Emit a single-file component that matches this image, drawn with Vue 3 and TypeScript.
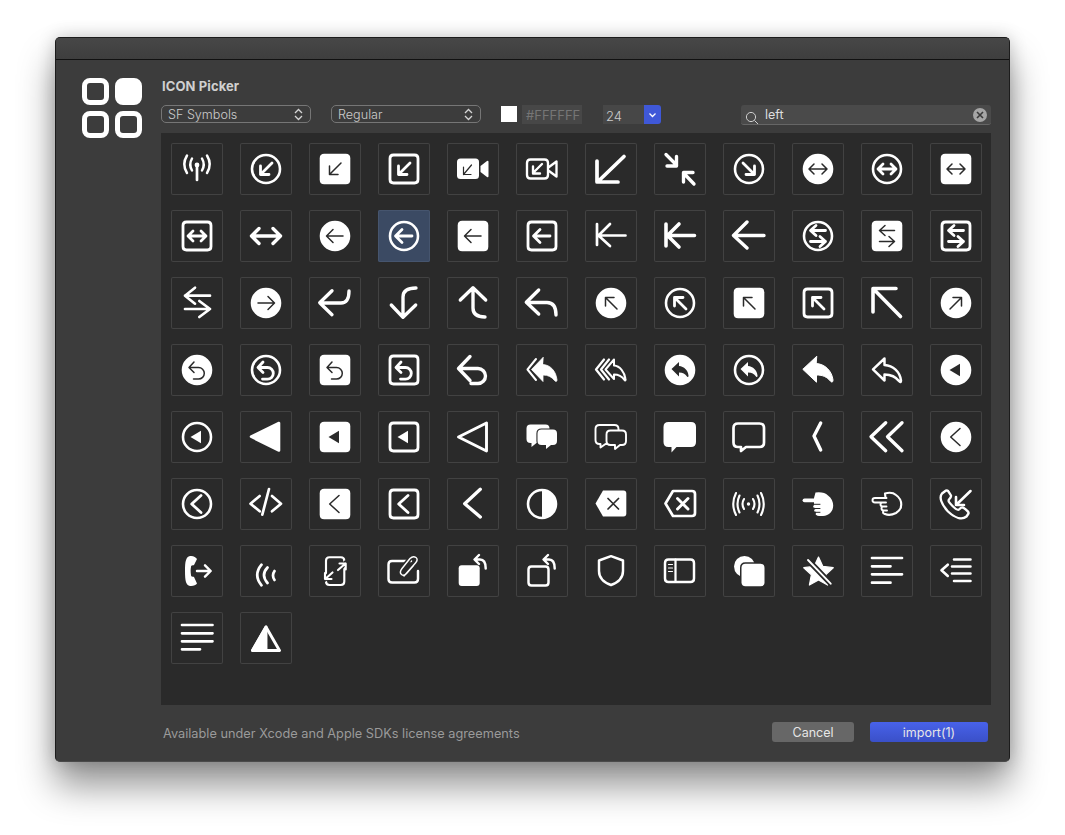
<script setup lang="ts">
type Layer = { d: string; fill?: string; stroke?: string; w?: number };

const W = "#fff";
const D = "#2a2a2a";

// the reference strokes come out a little heavier than measured
const WEIGHT = 1.12;

const f = (d: string, w = 0): Layer => ({ d, fill: W, stroke: w ? W : undefined, w });
const s = (d: string, w = 2.4): Layer => ({ d, stroke: W, w: w * WEIGHT });
const df = (d: string): Layer => ({ d, fill: D });
const ds = (d: string, w = 1.5): Layer => ({ d, stroke: D, w });

const circle = (cx: number, cy: number, r: number) =>
  `M${cx - r} ${cy}a${r} ${r} 0 1 0 ${2 * r} 0a${r} ${r} 0 1 0 ${-2 * r} 0Z`;
const rrect = (x0: number, y0: number, x1: number, y1: number, r: number) =>
  `M${x0 + r} ${y0}H${x1 - r}Q${x1} ${y0} ${x1} ${y0 + r}V${y1 - r}Q${x1} ${y1} ${x1 - r} ${y1}H${x0 + r}Q${x0} ${y1} ${x0} ${y1 - r}V${y0 + r}Q${x0} ${y0} ${x0 + r} ${y0}Z`;
const bubble = (x0: number, y0: number, x1: number, y1: number, r: number, tx: number, th: number) =>
  `M${x0 + r} ${y0}H${x1 - r}Q${x1} ${y0} ${x1} ${y0 + r}V${y1 - r}Q${x1} ${y1} ${x1 - r} ${y1}H${tx + 5}L${tx} ${y1 + th}V${y1}H${x0 + r}Q${x0} ${y1} ${x0} ${y1 - r}V${y0 + r}Q${x0} ${y0} ${x0 + r} ${y0}Z`;

const disc = f(circle(26, 26, 15.3));
const ring = s(circle(26, 26, 14), 2.3);
const box = f(rrect(10.7, 10.7, 41.3, 41.3, 4.5));
const frame = s(rrect(12, 12, 40, 40, 3.5), 2.5);

const onDisc = (g: string): Layer[] => [disc, ds(g)];
const inRing = (g: string): Layer[] => [ring, s(g, 2.5)];
const onBox = (g: string): Layer[] => [box, ds(g)];
const inFrame = (g: string): Layer[] => [frame, s(g, 2.5)];

const swArrow = "M32 20L20.5 31.5M20.5 23V31.5H29";
const seArrow = "M20 20L31.5 31.5M31.5 23V31.5H23";
const nwArrow = "M32 32L20.5 20.5M20.5 29V20.5H29";
const neArrow = "M20 32L31.5 20.5M23 20.5H31.5V29";
const lrArrow = "M17.5 26H34.5M22 21L17 26L22 31M30 21L35 26L30 31";
const leftArrow = "M18 26H34M24 19.5L17.5 26L24 32.5";
const rightArrow = "M18 26H34M28 19.5L34.5 26L28 32.5";
const swap = "M33.5 20.5H19M24 15.5L18.5 20.5L24 25.5M18.5 31.5H33.5M28 26.5L33.5 31.5L28 36.5";
const undo = "M23 18L18 23.5L23 28.5M18.5 23.5H27.5a5.6 5.6 0 0 1 0 11.6H22.5";
const chev = "M30 17.5L20.7 26L30 34.5";
const tri = "M19.5 26L30 19.8V32.2Z";
const smallReply =
  "M25 18L17.5 25L25 32.5V28.5C29 28.5 31 30 33 32.5C34 33.5 34.5 33 34.5 31.5C34 26 30 22.5 25 22Z";
const bigReply =
  "M24.5 12.5L10.8 25.3L24.5 38.2V31C31 31 35 33 38.5 37.2C40 38.8 41 38 41 36C40 27 33 20 24.5 19.5Z";
const outlineReply =
  "M23.5 14.5L12 25.3L23.5 36.5V30.5C30 30.5 35 33 38.5 37.5C39.5 38.5 40 38 40 36.5C39 27.5 32 21.5 23.5 21Z";
const paperclip =
  "M26 31L37.5 18Q40.5 14.5 38 12.5Q35 10.5 32 13.5L24 23.5Q21 27.5 23.5 29.5Q26 31.5 29 28L35.5 20.5";
const rotateArrow = "M28 14.5H33Q38.7 14.5 38.7 23.5M32 10L27.5 14.5L32 19";

const star = (() => {
  const pts: string[] = [];
  for (let i = 0; i < 10; i++) {
    const r = i % 2 ? 7.5 : 15.5;
    const a = -Math.PI / 2 + (i * Math.PI) / 5;
    pts.push(`${(26.5 + r * Math.cos(a)).toFixed(2)} ${(27.5 + r * Math.sin(a)).toFixed(2)}`);
  }
  return `M${pts.join("L")}Z`;
})();

const phoneOutline =
  "M16 12.5L12 15.5C9 19 11 26 18 33.5C25 40 32 42 36.5 38.5L38.5 35.5C39 34 38 33 33 29.5C31.5 29 31 29.5 29 31.5C28 32.5 26.5 32 22.5 28C18.5 24 18 23 19 21.5C21 19.5 21.5 19 21 17.5C18 12.5 17.5 12 16 12.5Z";
const phoneFill =
  "M19 11C15 12 14 16 14 26C14 36 15 40 19 41C22 41.5 25 40 26 38.5L23 32C22 31.5 20 32 20 30C19.5 27 19.5 24 20 22C20 20 22 20.5 23 20L26 14C25 12 22 10.5 19 11Z";

const icons: Layer[][] = [
  // row 1
  [
    s("M26 23V37", 2.4),
    f(circle(26, 22, 2.4)),
    s("M21 15.5Q17.5 21.5 21 27.5M31 15.5Q34.5 21.5 31 27.5M16 12.5Q10.5 21.5 16 30M36 12.5Q41.5 21.5 36 30", 2.2),
  ],
  inRing(swArrow),
  onBox(swArrow),
  inFrame(swArrow),
  [
    f(rrect(10, 15.5, 32, 36, 3.5)),
    f("M33.5 23L40 18Q41.5 17 41.5 19V33Q41.5 35 40 34L33.5 29Z"),
    ds("M24.5 22L16.5 31.5M16.5 24V31.5H24", 1.2),
  ],
  [
    s(rrect(11, 16.5, 32, 35.5, 3.5), 2.1),
    s("M33 24L40.5 18.5V33.5L33 28", 2.1),
    s("M26 21L17 30M17 23.5V30.5H24", 2.1),
  ],
  [s("M39 13.5L13 38.5M12 18V39H33", 3.3)],
  [s("M12 11.5L22.5 22M22.5 13.5V23H13M40 41L29.5 30M29.5 39V29.5H39", 3)],
  inRing(seArrow),
  onDisc(lrArrow),
  inRing(lrArrow),
  onBox(lrArrow),
  // row 2
  inFrame(lrArrow),
  [s("M12 26H40M19 18.5L11.5 26L19 33.5M33 18.5L40.5 26L33 33.5", 3)],
  onDisc(leftArrow),
  inRing(leftArrow),
  onBox(leftArrow),
  inFrame(leftArrow),
  [s("M12 14V35M13.5 25.5H40.5M25 14L13.5 25.5L25 36", 2.4)],
  [s("M12 14V36M13.5 25.5H40.5M25 14L13.5 25.5L25 37", 3.2)],
  [s("M11 25.5H41M24 12L10.5 25.5L24 38", 3)],
  inRing(swap),
  onBox(swap),
  inFrame(swap),
  // row 3
  [s("M39 18.7H14M24 10.7L14 18.7L24 26.7M14 32H39M28.3 24L39 32L28.3 40", 2.4)],
  onDisc(rightArrow),
  [s("M11 26H32Q40 26 40 14M23 13.7L10.7 25.7L23 37.7", 3)],
  [s("M25 40V20Q25 11 38 11M13.3 28L25 40.3L37.7 28", 3)],
  [s("M26 11V31Q26 40 38 40M13.3 23L26 10.7L38.7 23", 3)],
  [s("M11 25.5H31Q40 25.5 40 38M22.7 13L10.3 25.3L22.7 37", 3)],
  onDisc(nwArrow),
  inRing(nwArrow),
  onBox(nwArrow),
  inFrame(nwArrow),
  [s("M12 35V11.5H35M12.5 12L39.5 39.5", 3.2)],
  onDisc(neArrow),
  // row 4
  onDisc(undo),
  inRing(undo),
  onBox(undo),
  inFrame(undo),
  [s("M23 12.5L11.5 24.5L23 36.5M12 24.5H31a7.5 7.5 0 0 1 0 15H24", 3)],
  [
    s("M20 15L11.5 25.5L20 36", 1.8),
    ds("M29 11L15.5 25.5L29 40", 3),
    f("M27 13.5L15.5 25.5L27 37.5V31C32 31 36 33 38.5 36.5C40 38 41 37.5 41 36C40 27.5 35 21 27 20.5Z", 0.8),
  ],
  [
    s("M19 15.5L11 25.5L19 35.5M24 15.5L16 25.5L24 35.5", 2),
    s("M29 15.5L20.5 25.5L29 35V30.5C33 30.5 37 32.5 39.5 36C40.5 37 40.7 36 40.5 35C39.5 28 35 22 29 21.5Z", 1.8),
  ],
  [disc, df(smallReply)],
  [ring, f(smallReply)],
  [f(bigReply, 1)],
  [s(outlineReply, 2.2)],
  [disc, df(tri)],
  // row 5
  [ring, f(tri)],
  [f("M11 25.7L39 12V39.5Z", 2.6)],
  [box, df(tri)],
  [frame, f(tri)],
  [s("M11.5 26L39.5 12V40Z", 2.6)],
  [
    f(bubble(10.5, 13.5, 33.5, 32, 4, 15.5, 4)),
    ds(bubble(21.5, 18.5, 41, 34, 4, 30, 4), 2.2),
    f(bubble(21.5, 18.5, 41, 34, 4, 30, 4)),
  ],
  [
    s(bubble(10.5, 14, 33.5, 33, 4, 15.5, 3.5), 1.7),
    df(bubble(21.5, 19.5, 41, 34, 4, 30, 4)),
    s(bubble(21.5, 19.5, 41, 34, 4, 30, 4), 1.7),
  ],
  [f(bubble(9.5, 11, 42, 36, 5, 17.5, 5.5))],
  [s(bubble(10.5, 12.5, 41, 36, 4.5, 18, 4), 2.4)],
  [s("M28.7 12L22 25L28.7 39", 3)],
  [s("M24.7 11.7L10 25.7L24.7 39.7M41 11.7L26.5 25.7L41 39.7", 3)],
  [disc, ds(chev)],
  // row 6
  inRing(chev),
  [s("M19.7 18L10.5 25.7L19.7 33.3M32 18L41 25.7L32 33.3", 2.4), s("M29 11L22.3 36.7", 2.4)],
  onBox(chev),
  inFrame(chev),
  [s("M33.3 11.3L17.7 25.7L33.3 39", 3)],
  [ring, f("M26 12a14 14 0 0 1 0 28Z")],
  [
    f("M18 12.5H38.5Q41.3 12.5 41.3 15.5V35.5Q41.3 38.5 38.5 38.5H18L10.5 25.5Z"),
    ds("M23 20.5L33.5 31M33.5 20.5L23 31", 1.7),
  ],
  [
    s("M19 13H38Q41 13 41 16V35Q41 38 38 38H19L11.5 25.5Z", 2.4),
    s("M23.5 20.5L34 31M34 20.5L23.5 31", 2.6),
  ],
  [
    f(circle(25.5, 26, 1.7)),
    s("M21 21Q18 26 21 31M30 21Q33 26 30 31M16.5 17.5Q12.5 26 16.5 34.5M34.5 17.5Q38.5 26 34.5 34.5M13 15Q7.5 26 13 37M38 15Q43.5 26 38 37", 1.9),
  ],
  [
    s("M12.5 22.3H28", 3.4),
    f("M23.5 14.5Q32 13.5 36 17.5C42.5 22 43 32 37 36C33 38.5 28 38.5 25 37.5L22 27V20Z"),
    s("M22.5 28.5H28M23.5 32.5H28M25 36H28", 2.4),
    ds("M28 26.3H20M28 30.5H21M28 34.3H23", 1),
  ],
  [
    s("M24.5 20L24 15.5Q31 13.5 35 17C42 22 42 31 35 35C31 37 27 37.3 24 36", 1.9),
    s("M25.5 20H14Q11.5 20 11.5 22.3Q11.5 24.5 14 24.5H25M21.5 24.5Q19.5 24.5 19.5 26.5Q19.5 28.5 22 28.5H25.5M22 28.5Q20.5 28.5 20.5 30.5Q20.5 32.5 23 32.5H26M23 32.5Q22 32.5 22 34Q22 35.7 24 36", 1.7),
  ],
  [s(phoneOutline, 2.1), s("M40.5 13L26 27M26 19V27H34", 2.3)],
  // row 7
  [f(phoneFill), s("M26 26H39.5M34 20.3L39.7 26L34 31.7", 2.2)],
  [s("M21.5 19.7Q13 30 21.5 40.3M27.5 22.5Q20.5 30 27.5 38M34.5 26Q31.5 30.5 34.5 35", 2.4)],
  [
    s(rrect(17, 12.3, 35.3, 40, 3.5), 1.9),
    ds("M27 27L36.5 18M16 34L26 24", 5),
    s("M29 25L36.5 18.5M30.5 18.5H36.7V24.5M23.5 27.5L16.2 34M22.5 34H16V28", 1.9),
  ],
  [
    s("M33 16H14Q10.5 16 10.5 19.5V34Q10.5 37.5 14 37.5H36.5Q40 37.5 40 34V26", 2.2),
    ds(paperclip, 4.5),
    s(paperclip, 1.3),
  ],
  [f(rrect(11.7, 20.3, 32.7, 41, 3)), s(rotateArrow, 2.2)],
  [s(rrect(12.5, 21.5, 32.5, 40.5, 3), 2.2), s(rotateArrow, 2.2)],
  [s("M26 11.2L38 15.5V26C38 33 33 37.5 26 40C19 37.5 14 33 14 26V15.5Z", 2.2)],
  [
    s(rrect(11, 14.5, 40, 37, 3.5), 2.2),
    s("M21.5 14.5V37", 2),
    s("M14.5 19.5H18.5M14.5 23H18.5M14.5 26.5H18.5", 1.1),
  ],
  [
    f(circle(21.5, 21.5, 10.5)),
    ds(rrect(18.5, 18.7, 41.5, 41.3, 4), 3),
    f(rrect(18.5, 18.7, 41.5, 41.3, 4)),
  ],
  [f(star, 1.2), ds("M16 15L38.7 38.7", 5.5), s("M16 15L38.7 38.7", 1.7)],
  [s("M11 13H41M11 21.3H29.5M11 29.3H41M11 37.7H29.5", 2.4)],
  [s("M24 14.5H40.5M22 21.5H40.5M22 28.5H40.5M24 36H40.5M17.8 19.7L11.5 25.3L17.8 31", 2.3)],
  // row 8
  [s("M11 13H41.5M11 21.3H41.5M11 29.3H41.5M11 37.3H29", 2.4)],
  [s("M26 15L39.5 38.5H12.5Z", 2.6), f("M26 15L12.5 38.5H26Z", 2.9)],
];

const selectedIndex = 15;
</script>

<template>
  <div class="page">
    <section class="window">
      <header class="titlebar"></header>
      <div class="body">
        <div class="logo">
          <span class="logo-tile"></span>
          <span class="logo-tile solid"></span>
          <span class="logo-tile"></span>
          <span class="logo-tile"></span>
        </div>

        <div class="main">
          <h1 class="title">ICON Picker</h1>

          <div class="toolbar">
            <div class="select">
              <span>SF Symbols</span>
              <svg width="9" height="13" viewBox="0 0 9 13" class="updown">
                <path d="M1 5L4.5 1.5L8 5M1 8L4.5 11.5L8 8" />
              </svg>
            </div>
            <div class="select">
              <span>Regular</span>
              <svg width="9" height="13" viewBox="0 0 9 13" class="updown">
                <path d="M1 5L4.5 1.5L8 5M1 8L4.5 11.5L8 8" />
              </svg>
            </div>
            <div class="swatch"></div>
            <div class="hex">#FFFFFF</div>
            <div class="size">
              <span class="size-value">24</span>
              <span class="size-btn">
                <svg width="9" height="6" viewBox="0 0 9 6"><path d="M1.5 1.5L4.5 4.5L7.5 1.5" /></svg>
              </span>
            </div>
            <div class="search">
              <svg width="14" height="14" viewBox="0 0 14 14" class="mag">
                <circle cx="6" cy="6" r="4.6" />
                <path d="M9.4 9.4L13 13" />
              </svg>
              <span class="query">left</span>
              <span class="clear">
                <svg width="8" height="8" viewBox="0 0 8 8"><path d="M1 1L7 7M7 1L1 7" /></svg>
              </span>
            </div>
          </div>

          <div class="grid">
            <div
              v-for="(icon, i) in icons"
              :key="i"
              class="cell"
              :class="{ selected: i === selectedIndex }"
            >
              <svg width="52" height="52" viewBox="0 0 52 52">
                <path
                  v-for="(l, j) in icon"
                  :key="j"
                  :d="l.d"
                  :fill="l.fill ?? 'none'"
                  :stroke="l.stroke ?? 'none'"
                  :stroke-width="l.w ?? 0"
                />
              </svg>
            </div>
          </div>

          <footer class="footer">
            <span class="license">Available under Xcode and Apple SDKs license agreements</span>
            <div class="actions">
              <button class="btn cancel">Cancel</button>
              <button class="btn primary">import(1)</button>
            </div>
          </footer>
        </div>
      </div>
    </section>
  </div>
</template>

<style scoped>
.page {
  width: 1065px;
  height: 835px;
  box-sizing: border-box;
  padding: 37px 55px 73px;
  background: #fff;
  overflow: hidden;
  font-family: Inter, "Liberation Sans", sans-serif;
}

.window {
  height: 725px;
  box-sizing: border-box;
  display: flex;
  flex-direction: column;
  background: #3c3c3c;
  border: 1px solid #1c1c1c;
  border-bottom-color: #4a4a4a;
  border-radius: 5px;
  box-shadow: 0 24px 36px rgba(0, 0, 0, 0.42), 0 0 18px rgba(0, 0, 0, 0.2);
}

.titlebar {
  height: 21px;
  flex: none;
  background: linear-gradient(#474747, #3e3e3e);
  border-bottom: 1px solid #111;
  border-radius: 4px 4px 0 0;
}

.body {
  flex: 1;
  display: flex;
  min-height: 0;
}

.logo {
  width: 60px;
  margin: 18px 19px 0 26px;
  display: grid;
  grid-template-columns: 27px 27px;
  grid-auto-rows: 27px;
  gap: 6px;
  align-content: start;
  flex: none;
}

.logo-tile {
  box-sizing: border-box;
  border: 5px solid #fff;
  border-radius: 8px;
}

.logo-tile.solid {
  background: #fff;
}

.main {
  flex: 1;
  min-width: 0;
  padding-right: 18px;
  display: flex;
  flex-direction: column;
}

.title {
  margin: 19px 0 0 1px;
  font-size: 13px;
  line-height: 14px;
  letter-spacing: 0.1px;
  font-weight: 700;
  color: #d0d0d0;
}

.toolbar {
  margin-top: 12px;
  height: 20px;
  display: flex;
  align-items: flex-start;
}

.select {
  width: 150px;
  height: 18px;
  box-sizing: border-box;
  margin-right: 20px;
  padding: 0 7px 0 6px;
  display: flex;
  align-items: center;
  justify-content: space-between;
  border: 1px solid #767676;
  border-radius: 5px;
  font-size: 12.6px;
  font-weight: 300;
  color: #cccccc;
}

.updown path {
  fill: none;
  stroke: #d5d5d5;
  stroke-width: 1.3;
}

.swatch {
  width: 16px;
  height: 16px;
  margin: 1px 5px 0 0;
  background: #fff;
}

.hex {
  width: 60px;
  height: 19px;
  margin-right: 21px;
  background: #474747;
  padding-left: 4px;
  box-sizing: border-box;
  font-size: 13px;
  line-height: 20px;
  color: #767676;
}

.size {
  width: 58px;
  height: 19px;
  display: flex;
  margin-right: 80px;
}

.size-value {
  flex: 1;
  background: #474747;
  padding: 2px 0 0 3px;
  font-size: 13px;
  line-height: 19px;
  font-weight: 300;
  color: #cccccc;
}

.size-btn {
  width: 17px;
  display: flex;
  align-items: center;
  justify-content: center;
  background: #3f58d8;
  border-radius: 0 3px 3px 0;
}

.size-btn path {
  fill: none;
  stroke: #fff;
  stroke-width: 1.3;
}

.search {
  width: 250px;
  height: 20px;
  box-sizing: border-box;
  display: flex;
  align-items: center;
  padding: 0 4px;
  background: #4a4a4a;
  border-bottom: 1px solid #666;
  border-radius: 3px;
}

.mag {
  margin: 6px 6px 0 0;
  flex: none;
}

.mag circle,
.mag path {
  fill: none;
  stroke: #cfcfcf;
  stroke-width: 1;
}

.query {
  flex: 1;
  font-size: 12.5px;
  color: #dedede;
}

.clear {
  width: 14px;
  height: 14px;
  border-radius: 50%;
  background: #a6a6a6;
  display: flex;
  align-items: center;
  justify-content: center;
}

.clear path {
  stroke: #3a3a3a;
  stroke-width: 1.6;
}

.grid {
  margin-top: 8px;
  height: 572px;
  box-sizing: border-box;
  padding: 10px;
  background: #2a2a2a;
  display: grid;
  grid-template-columns: repeat(12, 52px);
  grid-auto-rows: 52px;
  column-gap: 17px;
  row-gap: 15px;
  align-content: start;
}

.cell {
  border-radius: 2px;
  box-shadow: inset 0 0 0 1px #424242;
}

.cell.selected {
  background: #3b4a63;
  box-shadow: inset 0 0 0 1px #46556e;
}

.cell svg {
  display: block;
  stroke-linecap: round;
  stroke-linejoin: round;
}

.footer {
  flex: 1;
  display: flex;
  align-items: flex-start;
  justify-content: space-between;
  padding: 17px 3px 0 2px;
}

.license {
  margin-top: 2px;
  font-size: 12.75px;
  line-height: 20px;
  color: #9a9a9a;
}

.actions {
  display: flex;
  gap: 16px;
}

.btn {
  height: 20px;
  padding: 0;
  border: none;
  border-radius: 3px;
  font-family: inherit;
  font-size: 12.5px;
  color: #e6e6e6;
}

.cancel {
  width: 82px;
  background: #676767;
}

.primary {
  width: 118px;
  background: linear-gradient(#4862ea, #3a50c8);
}
</style>
